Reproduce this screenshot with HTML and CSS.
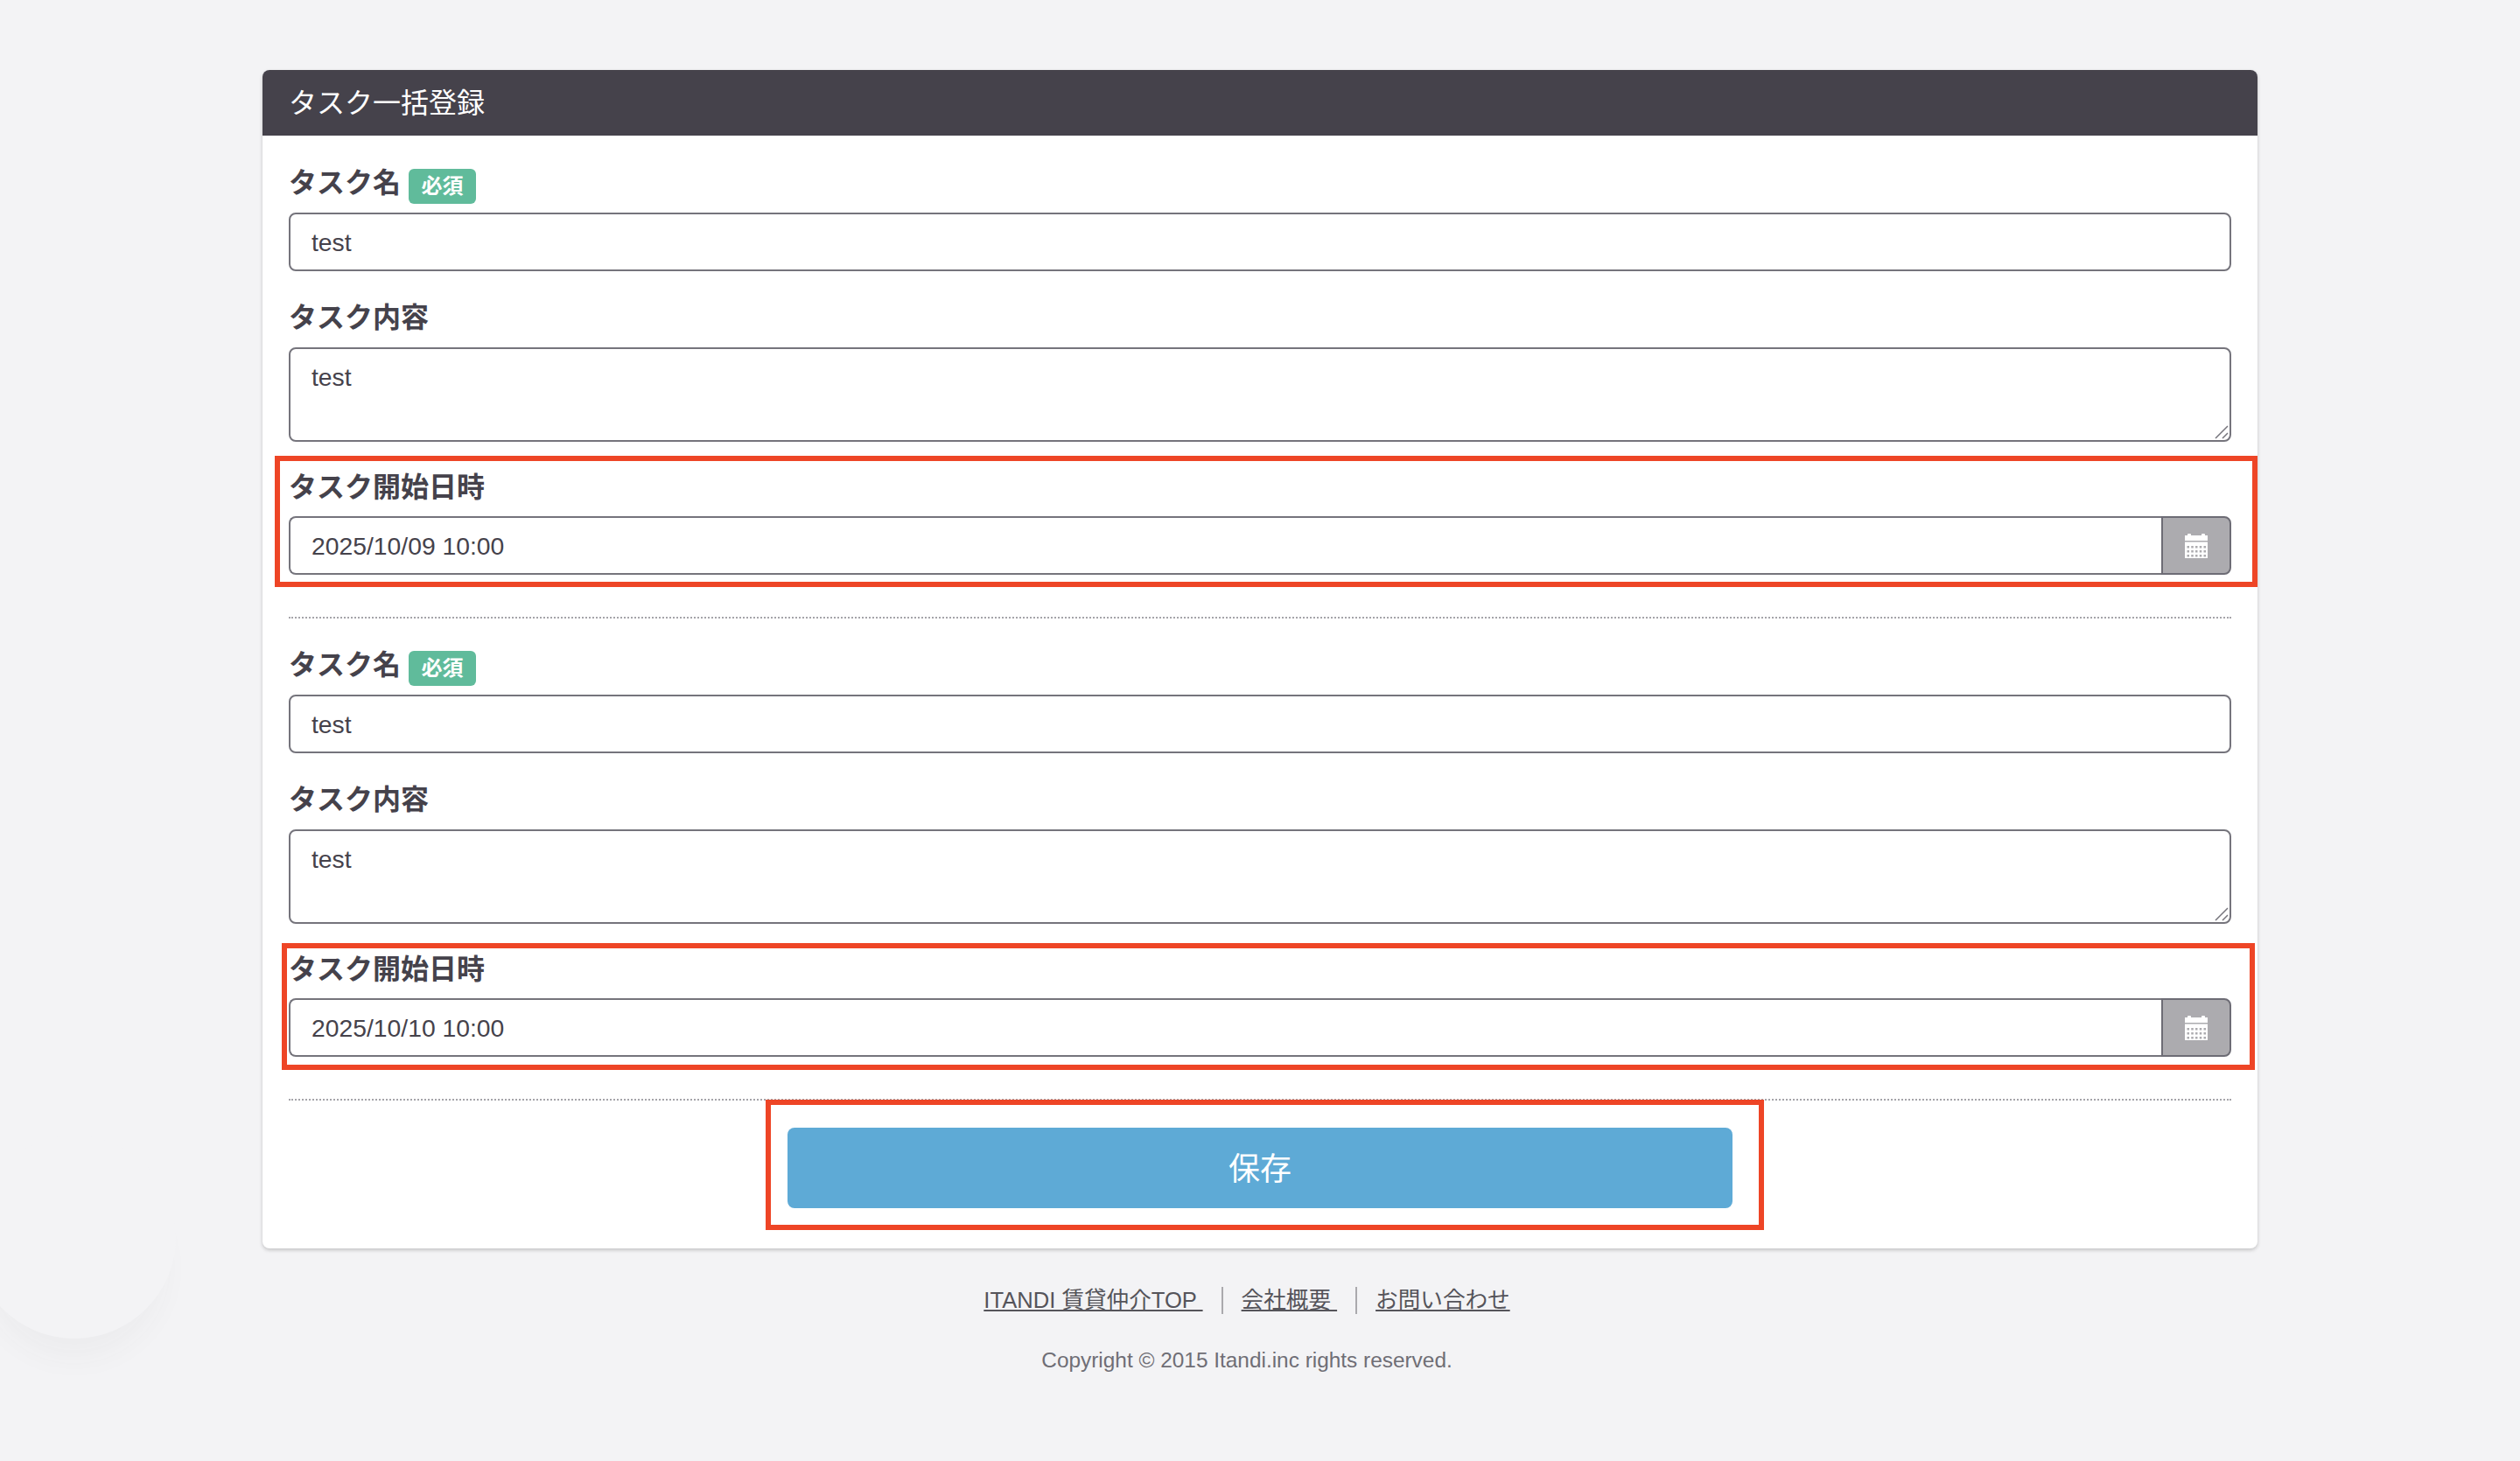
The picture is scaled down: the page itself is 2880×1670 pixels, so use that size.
FILE: index.html
```html
<!DOCTYPE html>
<html lang="ja">
<head>
    <meta charset="UTF-8">
    <meta name="viewport" content="width=device-width, initial-scale=1.0">
    <title>タスク一括登録</title>
    <link rel="stylesheet" href="styles.css">
</head>
<body>
    <div class="bg-circle"></div>

    <main class="panel">
        <h1 class="panel-title">タスク一括登録</h1>

        <form class="panel-body">
            <section class="task-group">
                <div class="field">
                    <label class="field-label">タスク名<span class="badge">必須</span></label>
                    <input class="text-input" type="text" value="test">
                </div>
                <div class="field">
                    <label class="field-label">タスク内容</label>
                    <div class="area-wrap">
                        <textarea class="text-area">test</textarea>
                        <svg class="resize-grip" viewBox="0 0 16 16"><path d="M1 15 15 1M9 15l6-6" stroke="#75747c" stroke-width="1.500" fill="none"/></svg>
                    </div>
                </div>
                <div class="field field-date">
                    <div class="mark mark-first"></div>
                    <label class="field-label">タスク開始日時</label>
                    <div class="date-group">
                        <input class="text-input date-input" type="text" value="2025/10/09 10:00">
                        <span class="date-addon">
                            <svg class="calendar-icon" viewBox="0 0 26 28">
                                <path fill="#fff" d="M0 2h3V1q0-1 1-1h2q1 0 1 1v1h12V1q0-1 1-1h2q1 0 1 1v1h3v6H0z"/>
                                <path fill="#fff" d="M0 9.500h26V28H0z"/>
                                <g fill="#acabaf">
                                    <rect x="2.500" y="14" width="2.500" height="2.500"/><rect x="7.250" y="14" width="2.500" height="2.500"/><rect x="12" y="14" width="2.500" height="2.500"/><rect x="16.750" y="14" width="2.500" height="2.500"/><rect x="21.500" y="14" width="2.500" height="2.500"/>
                                    <rect x="2.500" y="19" width="2.500" height="2.500"/><rect x="7.250" y="19" width="2.500" height="2.500"/><rect x="12" y="19" width="2.500" height="2.500"/><rect x="16.750" y="19" width="2.500" height="2.500"/><rect x="21.500" y="19" width="2.500" height="2.500"/>
                                    <rect x="2.500" y="24" width="2.500" height="2.500"/><rect x="7.250" y="24" width="2.500" height="2.500"/><rect x="12" y="24" width="2.500" height="2.500"/><rect x="16.750" y="24" width="2.500" height="2.500"/><rect x="21.500" y="24" width="2.500" height="2.500"/>
                                </g>
                            </svg>
                        </span>
                    </div>
                </div>
            </section>

            <section class="task-group">
                <div class="field">
                    <label class="field-label">タスク名<span class="badge">必須</span></label>
                    <input class="text-input" type="text" value="test">
                </div>
                <div class="field">
                    <label class="field-label">タスク内容</label>
                    <div class="area-wrap">
                        <textarea class="text-area">test</textarea>
                        <svg class="resize-grip" viewBox="0 0 16 16"><path d="M1 15 15 1M9 15l6-6" stroke="#75747c" stroke-width="1.500" fill="none"/></svg>
                    </div>
                </div>
                <div class="field field-date">
                    <div class="mark mark-second"></div>
                    <label class="field-label">タスク開始日時</label>
                    <div class="date-group">
                        <input class="text-input date-input" type="text" value="2025/10/10 10:00">
                        <span class="date-addon">
                            <svg class="calendar-icon" viewBox="0 0 26 28">
                                <path fill="#fff" d="M0 2h3V1q0-1 1-1h2q1 0 1 1v1h12V1q0-1 1-1h2q1 0 1 1v1h3v6H0z"/>
                                <path fill="#fff" d="M0 9.500h26V28H0z"/>
                                <g fill="#acabaf">
                                    <rect x="2.500" y="14" width="2.500" height="2.500"/><rect x="7.250" y="14" width="2.500" height="2.500"/><rect x="12" y="14" width="2.500" height="2.500"/><rect x="16.750" y="14" width="2.500" height="2.500"/><rect x="21.500" y="14" width="2.500" height="2.500"/>
                                    <rect x="2.500" y="19" width="2.500" height="2.500"/><rect x="7.250" y="19" width="2.500" height="2.500"/><rect x="12" y="19" width="2.500" height="2.500"/><rect x="16.750" y="19" width="2.500" height="2.500"/><rect x="21.500" y="19" width="2.500" height="2.500"/>
                                    <rect x="2.500" y="24" width="2.500" height="2.500"/><rect x="7.250" y="24" width="2.500" height="2.500"/><rect x="12" y="24" width="2.500" height="2.500"/><rect x="16.750" y="24" width="2.500" height="2.500"/><rect x="21.500" y="24" width="2.500" height="2.500"/>
                                </g>
                            </svg>
                        </span>
                    </div>
                </div>
            </section>

            <div class="submit-row">
                <div class="submit-wrap">
                    <div class="mark mark-submit"></div>
                    <button class="save-button" type="button">保存</button>
                </div>
            </div>
        </form>
    </main>

    <footer class="site-footer">
        <nav class="footer-links">
            <a href="#">ITANDI 賃貸仲介TOP </a>
            <span class="footer-sep"></span>
            <a href="#">会社概要 </a>
            <span class="footer-sep"></span>
            <a href="#">お問い合わせ</a>
        </nav>
        <p class="copyright">Copyright © 2015 Itandi.inc rights reserved.</p>
    </footer>
</body>
</html>
```

FILE: styles.css
```css
* {
    box-sizing: border-box;
}

html, body {
    height: 100%;
}

body {
    position: relative;
    margin: 0;
    padding-top: 80px;
    overflow: hidden;
    background-color: #f3f3f5;
    color: #45424b;
    font-family: "Liberation Sans", "Noto Sans CJK JP", sans-serif;
}

.bg-circle {
    position: absolute;
    left: -31px;
    top: 1298px;
    width: 232px;
    height: 232px;
    border-radius: 50%;
    background-color: #f3f3f5;
    box-shadow: 0 36px 34px -14px rgba(69, 67, 77, 0.04);
}

.panel {
    position: relative;
    width: 2280px;
    height: 1347px;
    margin: 0 auto;
    background-color: #fff;
    border-radius: 8px;
    box-shadow: 0 2px 4px rgba(0, 0, 0, 0.2);
}

.panel-title {
    height: 75px;
    margin: 0;
    padding-left: 30px;
    background-color: #45424b;
    border-radius: 8px 8px 0 0;
    color: #fff;
    font-size: 32px;
    font-weight: normal;
    line-height: 76px;
}

.panel-body {
    padding: 1px 30px 0;
}

.task-group {
    padding-bottom: 48px;
    border-bottom: 2px dotted #a5a4a9;
}

.field {
    padding-top: 31px;
}

.field-date {
    position: relative;
    padding-top: 29px;
}

.field-label {
    display: flex;
    height: 44px;
    margin-bottom: 12px;
    font-size: 32px;
    font-weight: bold;
    line-height: 44px;
}

.field-date .field-label {
    padding-top: 1px;
}

.badge {
    width: 77px;
    height: 40px;
    margin: 6px 0 0 9px;
    background-color: #60bb9b;
    border-radius: 6px;
    color: #fff;
    font-size: 24px;
    line-height: 40px;
    text-align: center;
}

.text-input,
.text-area {
    display: block;
    width: 100%;
    padding: 0 24px;
    background-color: #fff;
    border: 2px solid #75747c;
    border-radius: 8px;
    color: #45424b;
    font-family: inherit;
    font-size: 28.3px;
}

.text-input {
    height: 67px;
    padding-top: 2px;
}

.area-wrap {
    position: relative;
}

.text-area {
    height: 108px;
    padding-top: 16px;
    line-height: 32px;
    resize: none;
}

.resize-grip {
    position: absolute;
    right: 3px;
    bottom: 3px;
    width: 16px;
    height: 16px;
}

.date-group {
    display: flex;
}

.date-input {
    flex: 1;
    border-right: none;
    border-radius: 8px 0 0 8px;
}

.date-addon {
    display: flex;
    align-items: center;
    justify-content: center;
    width: 80px;
    height: 67px;
    padding-right: 1px;
    background-color: #acabaf;
    border: 2px solid #6d6c75;
    border-radius: 0 8px 8px 0;
}

.calendar-icon {
    width: 26px;
    height: 28px;
}

.submit-row {
    display: flex;
    justify-content: center;
    padding-top: 31px;
}

.submit-wrap {
    position: relative;
}

.save-button {
    display: block;
    width: 1080px;
    height: 92px;
    padding-bottom: 5px;
    background-color: #5eaad6;
    border: none;
    border-radius: 8px;
    color: #fff;
    font-family: inherit;
    font-size: 36px;
}

/* red annotation frames drawn over the form */
.mark {
    position: absolute;
    border: 6px solid #ee4526;
    pointer-events: none;
}

.mark-first {
    top: 16px;
    right: -30px;
    bottom: -14px;
    left: -16px;
}

.mark-second {
    top: 22px;
    right: -27px;
    bottom: -15px;
    left: -8px;
}

.mark-submit {
    top: -32px;
    right: -36px;
    bottom: -25px;
    left: -25px;
}

.site-footer {
    position: relative;
    padding: 42px 30px 0 0;
    text-align: center;
}

.footer-links {
    display: flex;
    align-items: center;
    justify-content: center;
    gap: 21px;
    height: 34px;
    font-size: 25.6px;
    line-height: 34px;
}

.footer-links a {
    color: #55545a;
    white-space: pre;
}

.footer-sep {
    width: 2px;
    height: 31px;
    background-color: #aaa9ad;
}

.copyright {
    margin: 35px 0 0;
    color: #6f6e75;
    font-size: 24.4px;
    line-height: 34px;
}
```
